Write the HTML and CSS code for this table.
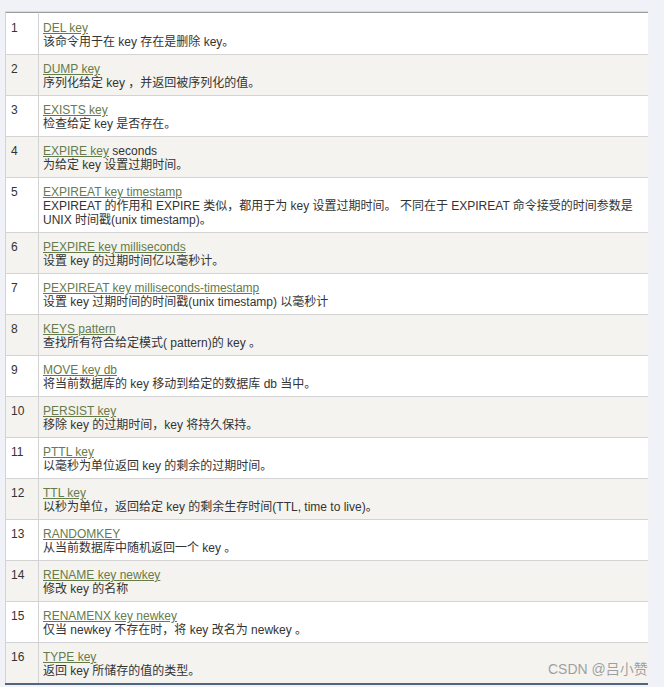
FILE: index.html
```html
<!DOCTYPE html>
<html lang="zh-CN">
<head>
<meta charset="utf-8">
<title>Redis key 命令</title>
<link rel="stylesheet" href="styles.css">
</head>
<body>
<div class="wrap">
  <table class="cmds">
    <colgroup><col class="c-num"><col class="c-desc"></colgroup>
    <tbody>
      <tr><td class="num">1</td><td class="desc"><a href="#">DEL key</a><br>该命令用于在 key 存在是删除 key。</td></tr>
      <tr><td class="num">2</td><td class="desc"><a href="#">DUMP key</a><br>序列化给定 key ，并返回被序列化的值。</td></tr>
      <tr><td class="num">3</td><td class="desc"><a href="#">EXISTS key</a><br>检查给定 key 是否存在。</td></tr>
      <tr><td class="num">4</td><td class="desc"><a href="#">EXPIRE key</a> seconds<br>为给定 key 设置过期时间。</td></tr>
      <tr><td class="num">5</td><td class="desc"><a href="#">EXPIREAT key timestamp</a><br>EXPIREAT 的作用和 EXPIRE 类似，都用于为 key 设置过期时间。 不同在于 EXPIREAT 命令接受的时间参数是 UNIX 时间戳(unix timestamp)。</td></tr>
      <tr><td class="num">6</td><td class="desc"><a href="#">PEXPIRE key milliseconds</a><br>设置 key 的过期时间亿以毫秒计。</td></tr>
      <tr><td class="num">7</td><td class="desc"><a href="#">PEXPIREAT key milliseconds-timestamp</a><br>设置 key 过期时间的时间戳(unix timestamp) 以毫秒计</td></tr>
      <tr><td class="num">8</td><td class="desc"><a href="#">KEYS pattern</a><br>查找所有符合给定模式( pattern)的 key 。</td></tr>
      <tr><td class="num">9</td><td class="desc"><a href="#">MOVE key db</a><br>将当前数据库的 key 移动到给定的数据库 db 当中。</td></tr>
      <tr><td class="num">10</td><td class="desc"><a href="#">PERSIST key</a><br>移除 key 的过期时间，key 将持久保持。</td></tr>
      <tr><td class="num">11</td><td class="desc"><a href="#">PTTL key</a><br>以毫秒为单位返回 key 的剩余的过期时间。</td></tr>
      <tr><td class="num">12</td><td class="desc"><a href="#">TTL key</a><br>以秒为单位，返回给定 key 的剩余生存时间(TTL, time to live)。</td></tr>
      <tr><td class="num">13</td><td class="desc"><a href="#">RANDOMKEY</a><br>从当前数据库中随机返回一个 key 。</td></tr>
      <tr><td class="num">14</td><td class="desc"><a href="#">RENAME key newkey</a><br>修改 key 的名称</td></tr>
      <tr><td class="num">15</td><td class="desc"><a href="#">RENAMENX key newkey</a><br>仅当 newkey 不存在时，将 key 改名为 newkey 。</td></tr>
      <tr><td class="num">16</td><td class="desc"><a href="#">TYPE key</a><br>返回 key 所储存的值的类型。</td></tr>
    </tbody>
  </table>
  <div class="bottom-bar"></div>
  <div class="watermark">CSDN @吕小赞</div>
</div>
</body>
</html>
```

FILE: styles.css
```css
html, body {
  margin: 0;
  padding: 0;
  background: #f1f2f7;
}

body {
  font-family: "Liberation Sans", "Noto Sans CJK SC", sans-serif;
  font-size: 12px;
  line-height: 14px;
  color: #333333;
}

.wrap {
  position: relative;
  width: 643px;
  padding: 11px 0 0 5px;
}

.cmds {
  width: 643px;
  table-layout: fixed;
  border-collapse: separate;
  border-spacing: 0;
  border-top: 1px solid #dadada;
  border-left: 1px solid #d3d3d3;
  background: #ffffff;
}

.c-num { width: 33px; }

.cmds td {
  vertical-align: top;
  padding: 7px 5px 5px 4px;
  border-bottom: 1px solid #d3d3d3;
}

.cmds tr:first-child td {
  border-top: 1px solid #9d9d9d;
  padding-top: 8px;
}

.cmds tr:last-child td {
  border-bottom: none;
}

.cmds tr:nth-child(even) td {
  background: #f4f3ef;
}

.cmds td.num {
  padding-left: 5px;
  padding-right: 2px;
  border-right: 1px solid #d3d3d3;
}

.cmds a {
  color: #667b4a;
  text-decoration: underline;
}

.bottom-bar {
  width: 643px;
  height: 2px;
  background: #4f6580;
}

.watermark {
  position: absolute;
  left: 548px;
  top: 660px;
  font-size: 14px;
  line-height: 18px;
  color: rgba(130, 130, 130, 0.75);
  white-space: nowrap;
}
```
